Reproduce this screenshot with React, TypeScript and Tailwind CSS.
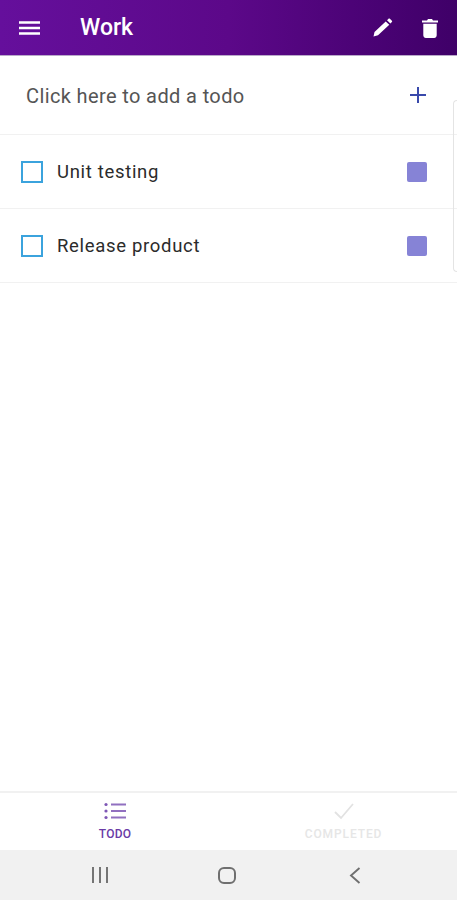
const font = { fontFamily: 'Roboto, sans-serif' }

const todos = ['Unit testing', 'Release product']

function TodoRow({ label }: { label: string }) {
  return (
    <div className="flex h-[74px] items-center border-b border-[#f1f1f1] pl-[21px] pr-[30px]">
      <div className="h-[22px] w-[22px] border-2 border-[#3ba3dd]" />
      <span className="ml-[14px] flex-1 pt-[2px] text-[18.5px] tracking-[0.68px] text-[#2b2b2b]">
        {label}
      </span>
      <div className="h-[20px] w-[20px] rounded-[2px] bg-[#8683d6]" />
    </div>
  )
}

export default function App() {
  return (
    <div style={font} className="relative flex h-[900px] w-[457px] flex-col overflow-hidden bg-white">
      <header className="flex h-[56px] items-center border-b border-[#b9a9c9] bg-gradient-to-r from-[#650f9c] via-[#5c0889] to-[#3f0068] pl-[19px] pr-[19px] text-white">
        <svg width="21" height="16" viewBox="0 0 21 16" fill="none" stroke="white" strokeWidth="2.6">
          <path d="M0 2.5h21M0 8h21M0 13.5h21" />
        </svg>
        <h1 className="ml-[40px] flex-1 pt-[2px] text-[23px] font-medium">Work</h1>
        <svg width="20" height="19" viewBox="0 0 20 19" fill="white">
          <path d="M0.500 18.500l1-4.600L12.700 3.400l3.600 3.400L5 17.300zM14 2.200l1.500-1.400c.4-.4 1-.4 1.400 0l2 1.900c.4.400.4 1 0 1.400l-1.500 1.400z" />
        </svg>
        <svg className="ml-[29px]" width="16" height="20" viewBox="0 0 16 20" fill="white">
          <path d="M0 2.500h5L6 1h4l1 1.500h5v2H0zM1.300 5.800h13.400V17.300c0 1.500-1.100 2.700-2.600 2.700H3.900c-1.500 0-2.600-1.200-2.600-2.700z" />
        </svg>
      </header>

      <div className="flex h-[79px] items-center border-b border-[#f1f1f1] pl-[26px] pr-[30px]">
        <span className="flex-1 pt-[2px] text-[20px] tracking-[0.38px] text-[#555555]">Click here to add a todo</span>
        <svg width="18" height="18" viewBox="0 0 18 18" stroke="#3949ab" strokeWidth="2">
          <path d="M9 1v16M1 9h16" />
        </svg>
      </div>

      {todos.map((todo) => (
        <TodoRow key={todo} label={todo} />
      ))}

      <div className="flex-1" />

      <nav className="flex h-[59px] border-t-2 border-[#f1f1f1]">
        <div className="flex w-[230px] flex-col items-center pt-[9px]">
          <svg width="22" height="18" viewBox="0 0 22 18" fill="#7e57b5">
            <circle cx="2" cy="2.5" r="1.6" />
            <circle cx="2" cy="9" r="1.6" />
            <circle cx="2" cy="15.500" r="1.6" />
            <path d="M7 1.500h15v2H7zM7 8h15v2H7zM7 14.500h15v2H7z" opacity="0.85" />
          </svg>
          <span className="mt-[7px] text-[12px] font-medium leading-[14px] tracking-[0.25px] text-[#6a3aa6]">TODO</span>
        </div>
        <div className="flex flex-1 flex-col items-center pt-[9px]">
          <svg width="20" height="18" viewBox="0 0 20 18" fill="none" stroke="#e2e2e2" strokeWidth="1.8">
            <path d="M1 10l6 6L19 2" />
          </svg>
          <span className="mt-[7px] text-[12px] font-medium leading-[14px] tracking-[0.9px] text-[#e6e6e6]">COMPLETED</span>
        </div>
      </nav>

      <div className="flex h-[50px] items-center bg-[#f1f1f1]">
        <div className="flex w-[199px] justify-center">
          <svg width="18" height="16" viewBox="0 0 18 16" stroke="#6f6f6f" strokeWidth="1.9">
            <path d="M2 0v16M9 0v16M16 0v16" />
          </svg>
        </div>
        <div className="flex w-[56px] justify-center">
          <div className="h-[17px] w-[18px] rounded-[6px] border-2 border-[#6f6f6f]" />
        </div>
        <div className="flex w-[199px] justify-center">
          <svg width="12" height="17" viewBox="0 0 12 17" fill="none" stroke="#6f6f6f" strokeWidth="1.9">
            <path d="M10.500 1L2 8.500l8.500 7.500" />
          </svg>
        </div>
      </div>

      <div className="absolute right-0 top-[100px] h-[172px] w-[4px] rounded-l-[4px] border-y border-l border-[#e4e4e4]" />
    </div>
  )
}
